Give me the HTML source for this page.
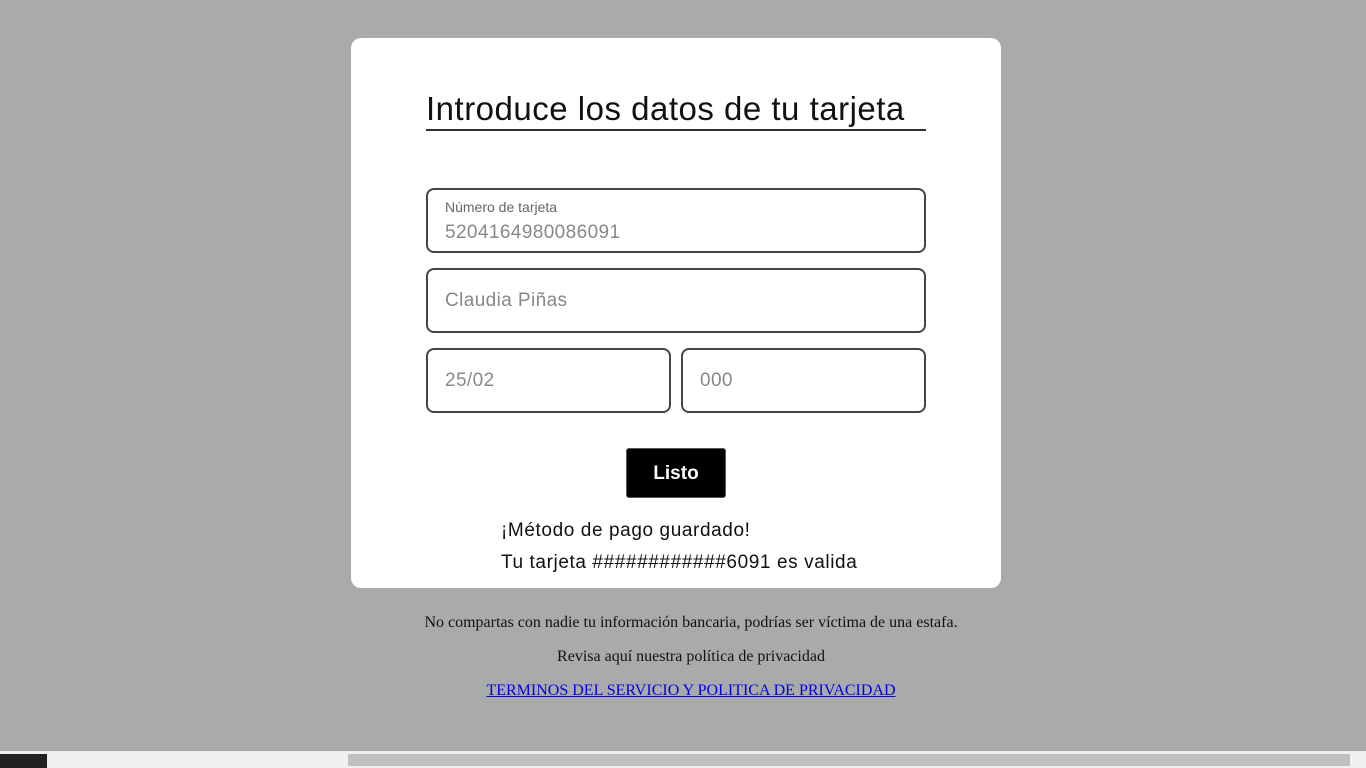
<!DOCTYPE html>
<html><head><meta charset="utf-8"><style>
body{margin:0;width:1366px;height:768px;background:#aaaaaa;position:relative;overflow:hidden;font-family:"Liberation Sans","DejaVu Sans",sans-serif}
.card{position:absolute;left:351px;top:38px;width:650px;height:550px;background:#fff;border-radius:10px}
h1{position:absolute;left:426px;top:89px;margin:0;width:500px;font-size:33px;letter-spacing:0.5px;font-weight:normal;color:#111;border-bottom:2px solid #333;height:40px;line-height:40px}
.in{position:absolute;border:2px solid #444;border-radius:8px;box-sizing:border-box;background:#fff;color:#888;font-size:19px;letter-spacing:0.4px}
.in span{position:absolute;left:17px}
.lbl{font-size:14px;color:#666;top:9px;letter-spacing:0}
.btn{position:absolute;left:626px;top:448px;width:100px;height:50px;background:#000;color:#fff;border-radius:3px;border:1px solid #555;box-sizing:border-box;font-size:19px;font-weight:bold;text-align:center;line-height:50px}
.msg{position:absolute;left:501px;font-size:19px;color:#111;letter-spacing:0.6px}
.f{position:absolute;left:8px;width:1366px;text-align:center;font-family:"Liberation Serif",serif;font-size:16px;color:#111}
</style></head><body>
<div class="card"></div>
<h1>Introduce los datos de tu tarjeta</h1>
<div class="in" style="left:426px;top:188px;width:500px;height:65px"><span class="lbl">Número de tarjeta</span><span style="top:32px">5204164980086091</span></div>
<div class="in" style="left:426px;top:268px;width:500px;height:65px"><span style="top:20px">Claudia Piñas</span></div>
<div class="in" style="left:426px;top:348px;width:245px;height:65px"><span style="top:20px">25/02</span></div>
<div class="in" style="left:681px;top:348px;width:245px;height:65px"><span style="top:20px">000</span></div>
<div class="btn">Listo</div>
<div class="msg" style="top:520px">¡Método de pago guardado!</div>
<div class="msg" style="top:552px">Tu tarjeta ############6091 es valida</div>
<div class="f" style="top:614px">No compartas con nadie tu información bancaria, podrías ser víctima de una estafa.</div>
<div class="f" style="top:648px">Revisa aquí nuestra política de privacidad</div>
<div class="f" style="top:682px"><a style="color:#00e;text-decoration:underline">TERMINOS DEL SERVICIO Y POLITICA DE PRIVACIDAD</a></div>
<div style="position:absolute;left:0;top:751px;width:1366px;height:17px;background:#f0f0f0"></div>
<div style="position:absolute;left:348px;top:754px;width:1002px;height:12px;background:#c0c0c0"></div>
<div style="position:absolute;left:0;top:754px;width:47px;height:14px;background:#222"></div>
</body></html>
